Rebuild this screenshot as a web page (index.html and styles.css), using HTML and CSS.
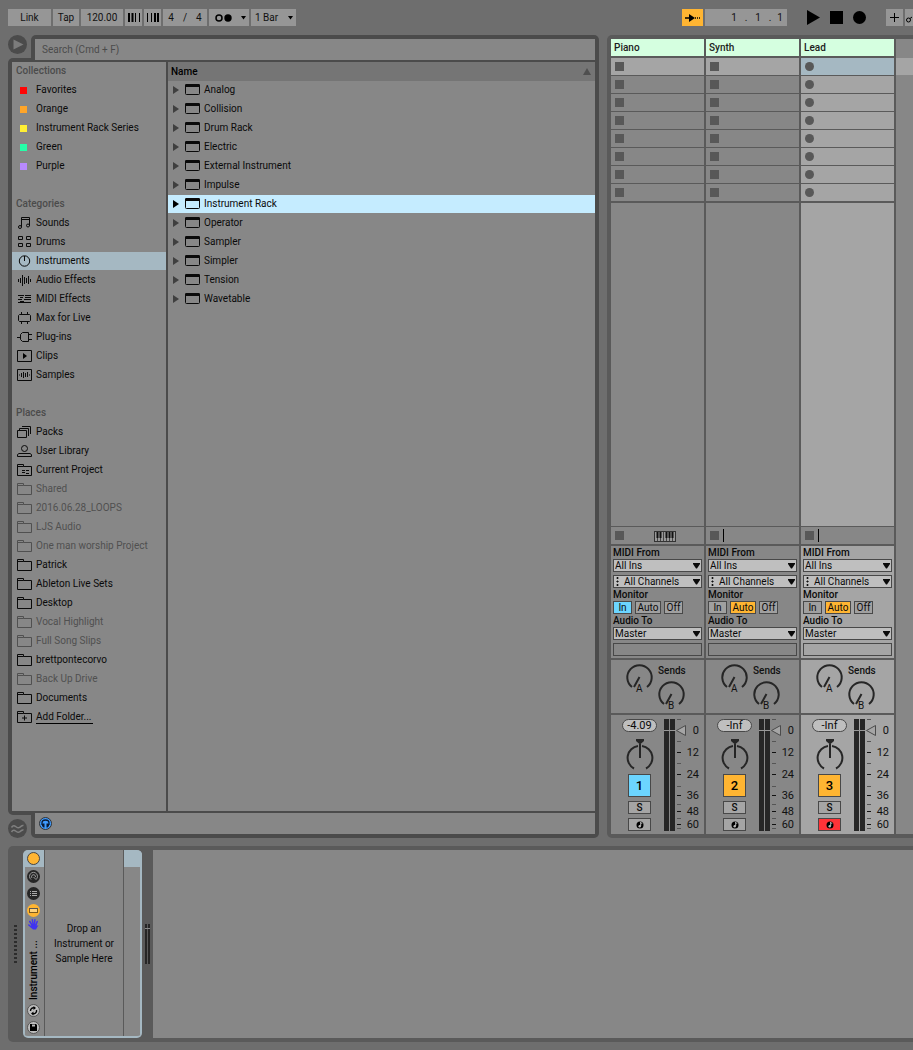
FILE: index.html
```html
<!DOCTYPE html>
<html lang="en">
<head>
<meta charset="utf-8">
<title>Live Set</title>
<link rel="stylesheet" href="styles.css">
</head>
<body>
<svg class="defs" aria-hidden="true">
  <symbol id="folder" viewBox="0 0 15 12"><path d="M.5 11.5V.5h6v2h8v9zM.5 2.5h6" fill="none" stroke="currentColor"/></symbol>
  <symbol id="window" viewBox="0 0 15 12"><rect x=".5" y=".5" width="14" height="10" rx="1" fill="none" stroke="currentColor"/><path d="M1 0h13l1 1v2H0V1z" fill="currentColor"/></symbol>
  <symbol id="tri" viewBox="0 0 6 8"><path d="M0 0l6 4-6 4z" fill="currentColor"/></symbol>
  <symbol id="down" viewBox="0 0 7 6"><path d="M0 0h7v1L4 5.500H3L0 1z" fill="currentColor"/></symbol>
  <symbol id="dots" viewBox="0 0 4 9"><path d="M0 1h3M0 4.500h3M0 8h3" stroke="#555" stroke-width="1"/><path d="M1.500 0v2M1.500 3.500v2M1.500 7v2" stroke="#111"/></symbol>
  <symbol id="sends" viewBox="0 0 93 53">
    <path d="M21 27A12.200 12.200 0 1 1 36 27M28.500 17L23 27M53 44A12.200 12.200 0 1 1 68 44M60.500 34L55 44" fill="none" stroke="#262626" stroke-width="2"/>
  </symbol>
  <symbol id="pan" viewBox="0 0 28 32">
    <path d="M10 0h8v2l-4 3.500L10 2z" fill="#262626"/>
    <path d="M14 5v14M8 29.500A12 12 0 0 1 12 7M16 7a12 12 0 0 1 4 22.500" fill="none" stroke="#262626" stroke-width="2"/>
  </symbol>
  <symbol id="meter" viewBox="0 0 38 115">
    <path d="M2 0h5v112H2zM8 0h5v112H8z" fill="#262626"/>
    <path d="M2 11.500h12" stroke="#999"/>
    <path d="M14.500 11.500l9-5v10z" fill="#a5a5a5" stroke="#4b4b4b"/>
    <path d="M15 33.500h4M15 55.500h4M15 76.500h4M15 92.500h4M15 105.500h4" stroke="#111"/>
    <path d="M15 .5h4M15 22.500h4M15 44.500h4M15 67.500h4M15 85.500h4M15 99.500h4M15 109.500h4" stroke="#555"/>
  </symbol>
  <symbol id="note" viewBox="0 0 8 8"><circle cx="4" cy="4" r="3.500" fill="#000"/><path d="M4.700 1v4M4.700 1.300l1.300 1.500" stroke="#bbb" fill="none"/><circle cx="3.700" cy="5.300" r="1.200" fill="#bbb"/></symbol>
</svg>

<header class="transport">
  <div class="group">
    <button class="ctl link">Link</button>
    <button class="ctl tap">Tap</button>
    <button class="ctl tempo">120.00</button>
    <button class="ctl nudge" aria-label="Nudge down"><svg width="12" height="9"><path d="M1 0v9M4.500 0v9" stroke="#000" stroke-width="2"/><path d="M7.500 0v9M11.500 0v9" stroke="#000"/></svg></button>
    <button class="ctl nudge" aria-label="Nudge up"><svg width="12" height="9"><path d="M.5 0v9M4.500 0v9" stroke="#000"/><path d="M8 0v9M11 0v9" stroke="#000" stroke-width="2"/></svg></button>
    <button class="ctl signature"><span>4</span><span>/</span><span>4</span></button>
    <button class="ctl metro" aria-label="Metronome"><svg width="17" height="8"><circle cx="4" cy="4" r="3" fill="none" stroke="#000" stroke-width="1.500"/><circle cx="13" cy="4" r="3.700"/></svg><svg width="5" height="4"><path d="M0 0h5L2.500 3.500z"/></svg></button>
    <button class="ctl quant"><span>1 Bar</span><svg width="5" height="4"><path d="M0 0h5L2.500 3.500z"/></svg></button>
  </div>
  <div class="group right">
    <button class="ctl follow" aria-label="Follow"><svg width="15" height="8"><path d="M0 4h6M10 4h1M12 4h1M14 4h1" stroke="#000" stroke-width="1.500"/><path d="M4 0l6 4-6 4z"/></svg></button>
    <button class="ctl position"><span>1</span><span>.</span><span>1</span><span>.</span><span>1</span></button>
    <div class="play-group">
      <button class="plain" aria-label="Play"><svg width="13" height="15"><path d="M0 0l13 7.500L0 15z"/></svg></button>
      <button class="plain" aria-label="Stop"><svg width="13" height="13"><path d="M0 0h13v13H0z"/></svg></button>
      <button class="plain" aria-label="Record"><svg width="13" height="13"><circle cx="6.500" cy="6.500" r="6.500"/></svg></button>
    </div>
    <button class="ctl plus" aria-label="Overdub"><svg width="9" height="9"><path d="M4.500 0v9M0 4.500h9" stroke="#000"/></svg></button>
    <button class="ctl auto" aria-label="Automation"><svg width="6" height="13"><circle cx="2.500" cy="9" r="2" fill="none" stroke="#000"/><path d="M4 7.500L6 6" stroke="#000"/></svg></button>
  </div>
</header>

<main class="workspace">
  <section class="browser">
    <div class="browser-top">
      <button class="round" aria-label="Toggle browser"><svg width="19" height="19"><circle cx="9.500" cy="9.500" r="9.500" fill="#4b4b4b"/><path d="M5.500 4.500v10l10-5z" fill="#7c7c7c"/></svg></button>
      <div class="search"><input type="search" aria-label="Search" placeholder="Search (Cmd + F)"></div>
    </div>
    <div class="browser-body">
      <nav class="sidebar">
        <h2>Collections</h2>
        <ul>
          <li><i class="swatch red"></i>Favorites</li>
          <li><i class="swatch orange"></i>Orange</li>
          <li><i class="swatch yellow"></i>Instrument Rack Series</li>
          <li><i class="swatch green"></i>Green</li>
          <li><i class="swatch purple"></i>Purple</li>
        </ul>
        <h2>Categories</h2>
        <ul>
          <li><svg class="ico"><path d="M4.500 10V.5h8V9M4.500 2.500h8" fill="none" stroke="currentColor"/><circle cx="3" cy="10" r="1.500" fill="none" stroke="currentColor"/><circle cx="11" cy="8.500" r="1.500" fill="none" stroke="currentColor"/></svg>Sounds</li>
          <li><svg class="ico"><path d="M1.500.5h4v3h-4zM9.500.5h4v3h-4zM1.500 7.500h4v3h-4zM9.500 7.500h4v3h-4z" fill="none" stroke="currentColor"/></svg>Drums</li>
          <li class="selected"><svg class="ico"><circle cx="7.500" cy="6" r="5.200" fill="none" stroke="currentColor"/><path d="M7.500 1v5" stroke="currentColor"/></svg>Instruments</li>
          <li><svg class="ico"><path d="M1.500 5v3M3.500 4v5M5.500 1v11M7.500 3v7M9.500 4v5M11.500 2v8M13.500 5v3" stroke="currentColor"/></svg>Audio Effects</li>
          <li><svg class="ico"><path d="M1 2.500h6M8 2.500h6M3 4.500h3M8 4.500h6M1 6.500h4M7 6.500h7M3 8.500h4M1 9.500h13" stroke="currentColor"/></svg>MIDI Effects</li>
          <li><svg class="ico"><path d="M2.500 2.500h10l1 1v5l-1 1h-10l-1-1v-5zM4.500 0v2M10.500 0v2M4.500 10v2M10.500 10v2" fill="none" stroke="currentColor"/></svg>Max for Live</li>
          <li><svg class="ico"><path d="M5.500 1.500h6v9h-6l-2-2v-5zM0 6.500h3M12 3.500h3M12 8.500h3" fill="none" stroke="currentColor"/></svg>Plug-ins</li>
          <li><svg class="ico"><path d="M.5.5h14v11H.5z" fill="none" stroke="currentColor"/><path d="M6 3l4 3-4 3z"/></svg>Clips</li>
          <li><svg class="ico"><path d="M.5.5h14v11H.5zM2.500 5.500v1M4.500 4v4M6.500 3v6M8.500 4v4M10.500 3v5M12.500 5.500v1" fill="none" stroke="currentColor"/></svg>Samples</li>
        </ul>
        <h2>Places</h2>
        <ul>
          <li><svg class="ico"><path d="M.5 4.500h9v7h-9zM2.500 4V2.500h9V10M5 .5h8.500V8" fill="none" stroke="currentColor"/></svg>Packs</li>
          <li><svg class="ico"><circle cx="7.500" cy="3.500" r="3" fill="none" stroke="currentColor"/><path d="M.5 11.500v-2l1.500-1h11l1.500 1v2z" fill="none" stroke="currentColor"/></svg>User Library</li>
          <li><svg class="ico"><use href="#folder"/><path d="M5 6.500h3M9 6.500h3M5 8.500h3M9 9.500h3" stroke="currentColor"/></svg>Current Project</li>
          <li class="dim"><svg class="ico"><use href="#folder"/></svg>Shared</li>
          <li class="dim"><svg class="ico"><use href="#folder"/></svg>2016.06.28_LOOPS</li>
          <li class="dim"><svg class="ico"><use href="#folder"/></svg>LJS Audio</li>
          <li class="dim"><svg class="ico"><use href="#folder"/></svg>One man worship Project</li>
          <li><svg class="ico"><use href="#folder"/></svg>Patrick</li>
          <li><svg class="ico"><use href="#folder"/></svg>Ableton Live Sets</li>
          <li><svg class="ico"><use href="#folder"/></svg>Desktop</li>
          <li class="dim"><svg class="ico"><use href="#folder"/></svg>Vocal Highlight</li>
          <li class="dim"><svg class="ico"><use href="#folder"/></svg>Full Song Slips</li>
          <li><svg class="ico"><use href="#folder"/></svg>brettpontecorvo</li>
          <li class="dim"><svg class="ico"><use href="#folder"/></svg>Back Up Drive</li>
          <li><svg class="ico"><use href="#folder"/></svg>Documents</li>
          <li><svg class="ico"><use href="#folder"/><path d="M7.500 4.500v5M5 7h5" stroke="currentColor"/></svg><a class="add" href="#add">Add Folder...</a></li>
        </ul>
      </nav>
      <div class="content">
        <div class="list-head"><span>Name</span><svg width="8" height="7"><path d="M4 0l4 7H0z" fill="#4f4f4f"/></svg></div>
        <ul class="list">
          <li><svg class="tri"><use href="#tri"/></svg><svg class="ico"><use href="#window"/></svg>Analog</li>
          <li><svg class="tri"><use href="#tri"/></svg><svg class="ico"><use href="#window"/></svg>Collision</li>
          <li><svg class="tri"><use href="#tri"/></svg><svg class="ico"><use href="#window"/></svg>Drum Rack</li>
          <li><svg class="tri"><use href="#tri"/></svg><svg class="ico"><use href="#window"/></svg>Electric</li>
          <li><svg class="tri"><use href="#tri"/></svg><svg class="ico"><use href="#window"/></svg>External Instrument</li>
          <li><svg class="tri"><use href="#tri"/></svg><svg class="ico"><use href="#window"/></svg>Impulse</li>
          <li class="active"><svg class="tri"><use href="#tri"/></svg><svg class="ico"><use href="#window"/></svg>Instrument Rack</li>
          <li><svg class="tri"><use href="#tri"/></svg><svg class="ico"><use href="#window"/></svg>Operator</li>
          <li><svg class="tri"><use href="#tri"/></svg><svg class="ico"><use href="#window"/></svg>Sampler</li>
          <li><svg class="tri"><use href="#tri"/></svg><svg class="ico"><use href="#window"/></svg>Simpler</li>
          <li><svg class="tri"><use href="#tri"/></svg><svg class="ico"><use href="#window"/></svg>Tension</li>
          <li><svg class="tri"><use href="#tri"/></svg><svg class="ico"><use href="#window"/></svg>Wavetable</li>
        </ul>
      </div>
    </div>
    <div class="browser-foot">
      <button class="round" aria-label="Groove pool"><svg width="19" height="19"><circle cx="9.500" cy="9.500" r="9.500" fill="#4b4b4b"/><path d="M3.500 8.500c3-5 5 2 8 0 1.500-1 2.500-2.500 4-2M3.500 13c3-5 5 2 8 0 1.500-1 2.500-2.500 4-2" fill="none" stroke="#808080" stroke-width="1.500"/></svg></button>
      <div class="preview"><button class="plain" aria-label="Preview"><svg width="13" height="13"><circle cx="6.500" cy="6.500" r="6" fill="#3f9bff" stroke="#333"/><path d="M3 8V6a3.500 3 0 0 1 7 0v2" fill="none" stroke="#0a1a33" stroke-width="1.300"/><path d="M4 6.500h1.500v4H4.500L3 9V7zM7.500 6.500H9l1 .5v2l-1.500 1.500h-1z" fill="#0a1a33"/></svg></button></div>
    </div>
  </section>

  <section class="session">
    <article class="track">
      <h3>Piano</h3>
      <ul class="slots"><li class="lit"><i></i></li><li><i></i></li><li><i></i></li><li><i></i></li><li><i></i></li><li><i></i></li><li><i></i></li><li><i></i></li></ul>
      <div class="empty"></div>
      <div class="stop"><i></i><svg class="keys" width="22" height="11"><rect x=".5" y=".5" width="21" height="10" fill="#999" stroke="#333"/><path d="M3.500 1v9M6.500 1v9M9.500 1v9M12.500 1v9M15.500 1v9M18.500 1v9" stroke="#444"/><path d="M3.500 1v6M6.500 1v6M12.500 1v6M15.500 1v6M18.500 1v6" stroke="#111" stroke-width="2"/></svg></div>
      <div class="io">
        <label for="mf1">MIDI From</label>
        <div class="pick"><select id="mf1"><option>All Ins</option></select><svg class="arrow"><use href="#down"/></svg></div>
        <div class="pick chan"><svg class="dots"><use href="#dots"/></svg><select aria-label="Channel"><option>All Channels</option></select><svg class="arrow"><use href="#down"/></svg></div>
        <span class="label">Monitor</span>
        <div class="monitor"><button class="in on-blue">In</button><button class="au">Auto</button><button class="in">Off</button></div>
        <label for="at1">Audio To</label>
        <div class="pick"><select id="at1"><option>Master</option></select><svg class="arrow"><use href="#down"/></svg></div>
        <div class="blank"></div>
      </div>
      <div class="sends"><svg class="svgtext" width="93" height="53"><use href="#sends"/><text x="25" y="32">A</text><text x="57" y="49">B</text><text class="strong" x="47" y="14">Sends</text></svg></div>
      <div class="mixer">
        <div class="strip"><output class="volume">-4.09</output><svg class="pan"><use href="#pan"/></svg><button class="number blue">1</button><button class="small">S</button><button class="small" aria-label="Arm"><svg width="8" height="8"><use href="#note"/></svg></button></div>
        <svg class="meter"><use href="#meter"/><text x="37" y="15">0</text><text x="37" y="37">12</text><text x="37" y="59">24</text><text x="37" y="80">36</text><text x="37" y="96">48</text><text x="37" y="109">60</text></svg>
      </div>
    </article>
    <article class="track">
      <h3>Synth</h3>
      <ul class="slots"><li class="lit"><i></i></li><li><i></i></li><li><i></i></li><li><i></i></li><li><i></i></li><li><i></i></li><li><i></i></li><li><i></i></li></ul>
      <div class="empty"></div>
      <div class="stop"><i></i><b></b></div>
      <div class="io">
        <label for="mf2">MIDI From</label>
        <div class="pick"><select id="mf2"><option>All Ins</option></select><svg class="arrow"><use href="#down"/></svg></div>
        <div class="pick chan"><svg class="dots"><use href="#dots"/></svg><select aria-label="Channel"><option>All Channels</option></select><svg class="arrow"><use href="#down"/></svg></div>
        <span class="label">Monitor</span>
        <div class="monitor"><button class="in">In</button><button class="au on-orange">Auto</button><button class="in">Off</button></div>
        <label for="at2">Audio To</label>
        <div class="pick"><select id="at2"><option>Master</option></select><svg class="arrow"><use href="#down"/></svg></div>
        <div class="blank"></div>
      </div>
      <div class="sends"><svg class="svgtext" width="93" height="53"><use href="#sends"/><text x="25" y="32">A</text><text x="57" y="49">B</text><text class="strong" x="47" y="14">Sends</text></svg></div>
      <div class="mixer">
        <div class="strip"><output class="volume">-Inf</output><svg class="pan"><use href="#pan"/></svg><button class="number">2</button><button class="small">S</button><button class="small" aria-label="Arm"><svg width="8" height="8"><use href="#note"/></svg></button></div>
        <svg class="meter"><use href="#meter"/><text x="37" y="15">0</text><text x="37" y="37">12</text><text x="37" y="59">24</text><text x="37" y="80">36</text><text x="37" y="96">48</text><text x="37" y="109">60</text></svg>
      </div>
    </article>
    <article class="track current">
      <h3>Lead</h3>
      <ul class="slots"><li class="lit"><i></i></li><li><i></i></li><li><i></i></li><li><i></i></li><li><i></i></li><li><i></i></li><li><i></i></li><li><i></i></li></ul>
      <div class="empty"></div>
      <div class="stop"><i></i><b></b></div>
      <div class="io">
        <label for="mf3">MIDI From</label>
        <div class="pick"><select id="mf3"><option>All Ins</option></select><svg class="arrow"><use href="#down"/></svg></div>
        <div class="pick chan"><svg class="dots"><use href="#dots"/></svg><select aria-label="Channel"><option>All Channels</option></select><svg class="arrow"><use href="#down"/></svg></div>
        <span class="label">Monitor</span>
        <div class="monitor"><button class="in">In</button><button class="au on-orange">Auto</button><button class="in">Off</button></div>
        <label for="at3">Audio To</label>
        <div class="pick"><select id="at3"><option>Master</option></select><svg class="arrow"><use href="#down"/></svg></div>
        <div class="blank"></div>
      </div>
      <div class="sends"><svg class="svgtext" width="93" height="53"><use href="#sends"/><text x="25" y="32">A</text><text x="57" y="49">B</text><text class="strong" x="47" y="14">Sends</text></svg></div>
      <div class="mixer">
        <div class="strip"><output class="volume">-Inf</output><svg class="pan"><use href="#pan"/></svg><button class="number">3</button><button class="small">S</button><button class="small armed" aria-label="Arm"><svg width="8" height="8"><use href="#note"/></svg></button></div>
        <svg class="meter"><use href="#meter"/><text x="37" y="15">0</text><text x="37" y="37">12</text><text x="37" y="59">24</text><text x="37" y="80">36</text><text x="37" y="96">48</text><text x="37" y="109">60</text></svg>
      </div>
    </article>
    <div class="rest"><div class="rest-lit"></div></div>
  </section>
</main>

<section class="devices">
  <svg class="grip" width="3" height="39"><path d="M1.500 0v39" stroke="#2c2c2c" stroke-width="3" stroke-dasharray="2 2"/></svg>
  <div class="device">
    <div class="device-bar">
      <div class="device-cap"><button class="plain" aria-label="Device on"><svg width="13" height="13"><circle cx="6.500" cy="6.500" r="6" fill="#ffb532" stroke="#444"/></svg></button></div>
      <div class="device-icons">
        <button class="plain" aria-label="Macro controls"><svg width="13" height="13"><circle cx="6.500" cy="6.500" r="6.500" fill="#262626"/><path d="M4 9.500A4 4 0 1 1 9 9.500L6.500 7M5 8A2 2 0 1 1 8.500 7" fill="none" stroke="#999"/></svg></button>
        <button class="plain" aria-label="Chain list"><svg width="13" height="13"><circle cx="6.500" cy="6.500" r="6.500" fill="#262626"/><path d="M3 4.500h1M5 4.500h5M3 6.500h1M5 6.500h5M3 8.500h1M5 8.500h5" stroke="#aaa"/></svg></button>
        <button class="plain" aria-label="Devices"><svg width="13" height="13"><circle cx="6.500" cy="6.500" r="6.500" fill="#ffb532"/><rect x="2.500" y="4.500" width="8" height="4" fill="#ffd27c" stroke="#7a5a20"/><path d="M2 4.500h9" stroke="#555"/></svg></button>
      </div>
      <svg class="hand" width="11" height="11"><path d="M1.800 2.500l2.500 4M4.300.8l1 5M6.900.8l-.4 5M9.200 2.500L7.800 6.500M.8 6l3 2.500" stroke="#4033f0" stroke-width="1.500" stroke-linecap="round"/><path d="M3.500 5.500h5L8.500 7l2-1-2.500 4.500h-3L2.500 8z" fill="#4033f0"/></svg>
      <div class="device-name">Instrument ...</div>
      <div class="device-icons tail">
        <button class="plain" aria-label="Hot-swap"><svg width="13" height="13"><circle cx="6.500" cy="6.500" r="6" fill="#bdbdbd" stroke="#555"/><path d="M3.500 7a3 3 0 0 1 4-3M9.500 6a3 3 0 0 1-4 3.500" fill="none" stroke="#000" stroke-width="1.400"/><path d="M6.500 2v4L9 4zM6.500 7.500v4L4 9.500z"/></svg></button>
        <button class="plain" aria-label="Save"><svg width="13" height="13"><circle cx="6.500" cy="6.500" r="6" fill="#bdbdbd" stroke="#555"/><path d="M3 3h6l1 1v6H3z"/><path d="M5 3.500h3v2H5z" fill="#bdbdbd"/></svg></button>
      </div>
    </div>
    <div class="drop">Drop an<br>Instrument or<br>Sample Here</div>
    <div class="device-end"></div>
  </div>
  <svg class="out" width="5" height="40"><path d="M0 0h2v40H0zM3 0h2v40H3z" fill="#262626"/><path d="M0 4.500h5" stroke="#888"/></svg>
  <div class="drop-area"></div>
</section>
</body>
</html>
```
FILE: styles.css
```css
* { box-sizing: border-box; }
body {
  margin: 0;
  height: 100vh;
  min-height: 840px;
  display: flex;
  flex-direction: column;
  background: #6e6e6e;
  color: #0a0a0a;
  font: 500 10px/18px Roboto, sans-serif;
  overflow: hidden;
}
h2, h3, ul { margin: 0; padding: 0; list-style: none; font: inherit; }
svg { display: block; flex: none; }
button, input, select { font: inherit; color: inherit; margin: 0; padding: 0; border: 0; border-radius: 0; }
.defs { position: absolute; width: 0; height: 0; }
.plain, .round { background: none; }

/* Transport */
.transport { display: flex; justify-content: space-between; padding: 9px 0 9px 8px; }
.group { display: flex; gap: 2px; }
.ctl {
  height: 17px;
  background: #969696;
  color: #111;
  font-weight: 400;
  line-height: 17px;
  display: flex;
  align-items: center;
  justify-content: center;
}
.link { width: 43px; }
.tap { width: 26px; }
.tempo { width: 42px; }
.nudge, .plus { width: 17px; }
.signature { width: 44px; gap: 9px; }
.metro { width: 40px; justify-content: space-between; padding: 0 3px 0 6px; }
.quant { width: 45px; justify-content: space-between; padding: 0 3px 0 4px; }
.follow { width: 21px; background: #ffb532; }
.position { width: 82px; justify-content: flex-end; padding-right: 3px; }
.position span { width: 12px; text-align: center; }
.position span:last-child { width: 8px; }
.play-group { display: flex; align-items: center; gap: 10px; padding: 0 18px; }
.auto { width: 8px; }

/* Browser */
.workspace { flex: 1; display: flex; gap: 8px; padding-left: 8px; min-height: 0; }
.browser { flex: 1; display: flex; flex-direction: column; min-width: 0; }
.browser-top, .browser-foot { display: flex; gap: 4px; height: 23px; }
.round { width: 19px; height: 19px; }
.search, .preview { flex: 1; height: 25px; background: #4b4b4b; position: relative; z-index: 1; }
.search { padding: 4px 4px 0; border-radius: 5px 5px 0 0; }
.search input { display: block; width: 100%; height: 21px; padding: 0 7px; background: #878787; font-weight: 400; outline: 0; appearance: none; }
.search input::placeholder { color: #4b4b4b; opacity: 1; }
.browser-body { flex: 1; display: flex; gap: 2px; padding: 4px; background: #4b4b4b; border-radius: 5px 0 0 5px; min-height: 0; }
.sidebar { width: 154px; background: #878787; }
.sidebar h2, .sidebar li { height: 18px; margin-bottom: 1px; }
.sidebar h2 { padding-left: 4px; color: #4b4b4b; }
.sidebar ul + h2 { margin-top: 20px; }
.sidebar li { display: flex; align-items: center; gap: 4px; padding-left: 5px; font-weight: 400; }
.sidebar .selected { background: #a5b8c2; }
.sidebar .dim { color: #505050; }
.ico { width: 15px; height: 12px; }
.swatch { width: 7px; height: 7px; margin: 0 5px 0 3px; }
.red { background: #ff0505; }
.orange { background: #ffa529; }
.yellow { background: #fff034; }
.green { background: #25ffa8; }
.purple { background: #b88aff; }
.add { color: inherit; text-decoration: none; line-height: 12px; border-bottom: 1px solid #000; padding-right: 2px; }
.content { flex: 1; background: #878787; }
.list-head { display: flex; align-items: center; justify-content: space-between; height: 19px; padding: 0 4px 0 3px; background: #757575; color: #000; }
.list li { display: flex; align-items: center; height: 18px; margin-bottom: 1px; padding-left: 5px; gap: 4px; font-weight: 400; }
.list .active { background: #c5ecff; }
.tri { width: 6px; height: 8px; margin-right: 2px; color: #3f3f3f; }
.active .tri { color: #000; }
.browser-foot { align-items: flex-end; }
.preview { padding: 0 4px 4px; border-radius: 0 0 5px 5px; }
.preview::before { content: ""; position: absolute; z-index: -1; inset: 0 4px 4px; background: #878787; }
.preview button { margin: 4px; display: block; }

/* Session */
.session { width: 306px; display: flex; gap: 2px; padding: 4px 0 4px 4px; background: #5a5a5a; border-radius: 5px 0 0 5px; }
.track { width: 93px; display: flex; flex-direction: column; gap: 2px; }
.track h3 { height: 17px; line-height: 18px; padding-left: 3px; background: #d5ffe0; color: #1c1c1c; }
.slots { display: grid; gap: 1px; }
.slots li, .stop { height: 17px; padding: 4px; background: #878787; }
.slots .lit { background: #a5a5a5; }
.slots i, .stop i { display: block; width: 9px; height: 9px; background: #585858; }
.empty { flex: 1; margin-bottom: -1px; background: #878787; }
.stop { display: flex; }
.stop b { width: 1px; height: 13px; margin: -2px 0 0 4px; background: #000; }
.keys { margin-left: 30px; }
.io { height: 112px; padding: 0 2px 2px; background: #878787; line-height: 13px; }
.io label, .label { display: block; height: 13px; }
.pick { position: relative; display: flex; height: 13px; border: 1px solid #484848; background: #bfbfbf; }
.pick select { flex: 1; height: 11px; padding-left: 1px; background: none; font-weight: 400; line-height: 11px; appearance: none; outline: 0; }
.chan { margin-top: 3px; }
.dots { width: 4px; height: 9px; margin: 1px 3px 0 2px; }
.arrow { position: absolute; right: 1px; top: 3px; width: 7px; height: 6px; pointer-events: none; }
.monitor { display: flex; gap: 3px; }
.monitor button { height: 13px; border: 1px solid #484848; background: #a0a0a0; font-weight: 400; line-height: 11px; }
.in { width: 19px; }
.au { width: 26px; }
.monitor .on-blue { background: #6cd5ff; }
.monitor .on-orange { background: #ffb532; }
.blank { height: 13px; margin-top: 3px; border: 1px solid #484848; }
.sends { height: 53px; background: #878787; }
.svgtext { font-weight: 400; fill: #111; }
.strong { font-weight: 500; }
.mixer { height: 119px; display: flex; justify-content: space-between; padding: 4px 4px 0 11px; background: #878787; }
.strip { width: 35px; display: flex; flex-direction: column; align-items: center; gap: 4px; }
.volume { width: 35px; height: 13px; border: 1px solid #484848; border-radius: 7px; background: #bfbfbf; font-size: 11px; font-weight: 400; line-height: 11px; text-align: center; }
.pan { width: 28px; height: 32px; margin: 3px 0 -1px; }
.number { width: 23px; height: 23px; border: 1px solid #484848; background: #ffb532; font-size: 13px; color: #000; }
.number.blue { background: #6cd5ff; }
.small { width: 23px; height: 13px; border: 1px solid #484848; background: #a5a5a5; line-height: 11px; display: flex; align-items: center; justify-content: center; }
.small.armed { background: #ff3338; }
.meter { width: 38px; height: 115px; font-size: 11px; font-weight: 400; fill: #111; text-anchor: end; }
.current .slots li, .current .empty, .current .io, .current .sends, .current .mixer { background: #a5a5a5; }
.current .slots .lit { background: #a5b8c2; }
.current .slots i { border-radius: 50%; }
.rest { flex: 1; padding-top: 19px; background: #878787; }
.rest-lit { height: 17px; background: #a5a5a5; }

/* Device view */
.devices { height: 196px; margin: 8px 0 8px 8px; padding: 4px 0 4px 6px; display: flex; align-items: center; background: #5a5a5a; border-radius: 5px 0 0 5px; }
.device { align-self: stretch; width: 119px; margin: 0 3px 0 6px; display: flex; border-radius: 5px; overflow: hidden; border-bottom: 2px solid #a5b8c2; background: #878787; }
.device-bar { width: 21px; display: flex; flex-direction: column; align-items: center; padding-right: 2px; border-left: 2px solid #a5b8c2; }
.device-cap { align-self: stretch; height: 17px; margin-right: -2px; padding: 2px; background: #a5b8c2; }
.device-cap button, .device-icons button { display: block; }
.device-icons { display: grid; gap: 4px; margin-top: 3px; }
.hand { margin-top: 2px; }
.device-name { flex: 1; writing-mode: vertical-rl; transform: rotate(180deg); line-height: 18px; color: #000; }
.tail { margin: 4px 0 2px; }
.drop { flex: 1; display: flex; align-items: center; justify-content: center; border: solid #5a5a5a; border-width: 0 1px; font-weight: 400; line-height: 15px; text-align: center; }
.device-end { width: 18px; border: solid #a5b8c2; border-width: 17px 2px 0 0; }
.out { margin-right: 3px; }
.drop-area { flex: 1; align-self: stretch; background: #878787; }
```
